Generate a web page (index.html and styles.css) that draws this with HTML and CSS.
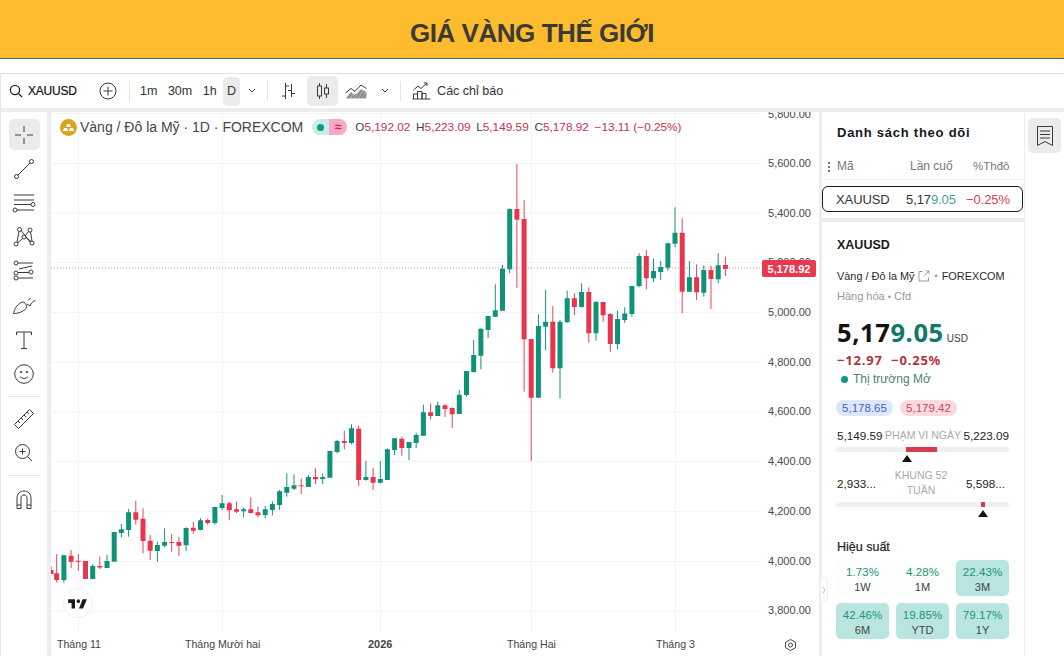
FILE: index.html
```html
<!DOCTYPE html>
<html lang="vi">
<head>
<meta charset="utf-8">
<title>Giá vàng thế giới</title>
<link rel="stylesheet" href="styles.css">
</head>
<body>
<header class="banner"><h1>GIÁ VÀNG THẾ GIỚI</h1></header>
<div class="app">
  <div class="toolbar">
    <div class="sym">
      <svg class="ic" width="14" height="14" viewBox="0 0 14 14"><circle cx="6" cy="6" r="4.6"/><path d="M9.4 9.4L13 13"/></svg>
      <span>XAUUSD</span>
    </div>
    <svg class="ic" width="18" height="18" viewBox="0 0 18 18"><circle cx="9" cy="9" r="8"/><path d="M9 4.5v9M4.5 9h9"/></svg>
    <i class="sep first"></i>
    <div class="tfs">
      <span>1m</span><span>30m</span><span>1h</span><span class="active d">D</span>
    </div>
    <svg class="ic chev" width="10" height="6" viewBox="0 0 10 6"><path d="M2 1l3 3 3-3"/></svg>
    <i class="sep"></i>
    <svg class="ic bars" width="16" height="18" viewBox="0 0 16 18"><path d="M5.500 1V17M5.500 4H9M2 14H5.500M11.500 2V15M8 8.500H11.500M11.500 11.500H15"/></svg>
    <span class="active candle">
      <svg class="ic" width="14" height="18" viewBox="0 0 14 18"><path d="M3.500 1V4M3.500 14V17M10.500 2V6M10.500 12V16"/><rect x="1.500" y="4" width="4" height="10"/><rect x="8.500" y="6" width="4" height="6"/></svg>
    </span>
    <svg class="ic area" width="22" height="16" viewBox="0 0 22 16"><path d="M0.500 10L6 5.500 10 8.500 16 2 21.500 5.500"/><path class="hatch" d="M0.500 15.500L6 9 10 12 16 6 21.500 9V15.500Z"/><path class="hatchline" d="M3 15L7 10M7 15L11 11M11 15L16 8M15 15L19 9M18 15L21 11"/></svg>
    <svg class="ic chev wide" width="10" height="6" viewBox="0 0 10 6"><path d="M2 1l3 3 3-3"/></svg>
    <i class="sep"></i>
    <svg class="ic ind" width="19" height="18" viewBox="0 0 19 18"><path d="M1.500 8L6 4 9 6.500 15 1M12 1H15V4"/><path d="M1.500 17V12H5.500V17M5.500 17V9.500H10V17M10 17V11.500H14V17M0.500 17H18.500"/></svg>
    <span class="ind-label">Các chỉ báo</span>
  </div>

  <div class="main">
    <aside class="tools">
      <span class="tool active"><svg class="ic" width="20" height="20" viewBox="0 0 20 20"><path d="M10 1V7M10 13V19M1 10H7M13 10H19"/></svg></span>
      <span class="tool"><svg class="ic" width="22" height="22" viewBox="0 0 22 22"><circle cx="3.500" cy="18.500" r="2"/><circle cx="18.500" cy="3.500" r="2"/><path d="M5 17L17 5"/></svg></span>
      <span class="tool"><svg class="ic" width="24" height="22" viewBox="0 0 24 22"><path d="M2 3H22M2 8H22M2 12.500H19M5 18H22"/><circle cx="21" cy="12.500" r="2"/><circle cx="3" cy="18" r="2"/></svg></span>
      <span class="tool"><svg class="ic" width="22" height="22" viewBox="0 0 22 22"><circle cx="6.500" cy="3.500" r="2"/><circle cx="17" cy="4" r="2"/><circle cx="3" cy="18" r="2"/><circle cx="19" cy="17" r="2"/><circle cx="11" cy="11" r="2"/><path d="M6 5.500L4 16M8 4.500L17 16M15.500 5.500L12.500 9.500M9.500 12.500L4.500 17M13 11.500L18 15.500M17.500 6L19 15"/></svg></span>
      <span class="tool"><svg class="ic" width="22" height="22" viewBox="0 0 22 22"><circle cx="3" cy="3" r="2"/><circle cx="3" cy="13" r="2"/><circle cx="18" cy="12" r="2"/><circle cx="3" cy="18" r="2"/><path d="M5 3H20M5 12.500H16M5 18H20M6 9L19 6" /></svg></span>
      <span class="tool"><svg class="ic" width="24" height="20" viewBox="0 0 24 20"><path d="M1.500 18.500C3 11 8 7 12 7C14 9 15 11 14.500 13C11 17 6 18.500 1.500 18.500ZM15 9L18 11C19 8 21 6 23.500 5.500M16 5.500L18.500 3"/></svg></span>
      <span class="tool"><svg class="ic" width="18" height="20" viewBox="0 0 18 20"><path d="M1.500 5V2H16.500V5M9 2V18.500M6 18.500H12"/></svg></span>
      <span class="tool"><svg class="ic" width="20" height="20" viewBox="0 0 20 20"><circle cx="10" cy="10" r="9.300"/><circle cx="7" cy="8" r=".8"/><circle cx="13" cy="8" r=".8"/><path d="M6 12.500C8 15 12 15 14 12.500"/></svg></span>
      <i class="tool-sep"></i>
      <span class="tool"><svg class="ic" width="22" height="22" viewBox="0 0 22 22"><path d="M1.500 16.500L16.500 1.500 20.500 5.500 5.500 20.500ZM5 13L7 15M8 10L10 12M11 7L13 9M14 4L16 6"/></svg></span>
      <span class="tool"><svg class="ic" width="20" height="20" viewBox="0 0 20 20"><circle cx="8.500" cy="8.500" r="7"/><path d="M13.500 13.500L18 18M8.500 5.500V11.500M5.500 8.500H11.500"/></svg></span>
      <i class="tool-sep"></i>
      <span class="tool magnet"><svg class="ic" width="16" height="20" viewBox="0 0 16 20"><path d="M1 18.500V8C1 4 4 1 8 1S15 4 15 8V18.500H11V8C11 6 10 5 8 5S5 6 5 8V18.500ZM1 15H5M11 15H15"/></svg></span>
    </aside>

    <section class="chart">
      <svg class="plot" width="768" height="544" viewBox="51 112 768 544">
        <path class="grid" d="M51 113.500H760M51 163.500H760M51 213H760M51 262.500H760M51 312.500H760M51 362H760M51 412H760M51 461.500H760M51 511.500H760M51 561.500H760M51 611H760M78.500 112V632M222.500 112V632M380.500 112V632M531.500 112V632M675.500 112V632"/>
        <path class="wick up" d="M63.900 555V582.700M92.700 564V579M107 554.700V568M121.400 524V537.300M128.600 509V536.700M157.400 541.700V561.700M164.600 528.300V547.300M186.100 527.300V551M200.500 518.300V530.300M214.900 506.700V524.700M222.100 495V510M243.600 507.700V517.300M265.200 506V518.300M272.400 501.300V515.300M279.600 490V510M286.800 473.300V496.700M294 474.300V490M308.400 474.700V487M322.700 473.300V484M337.100 440V453.300M351.500 424.300V444.300M365.900 461V480.700M380.300 461V483.300M387.400 448.300V480M394.600 438V455M409 442V460M416.200 432.700V448M423.400 404.700V435.700M437.800 401.700V416M459.300 390V414M466.500 371V396.700M473.700 340V372.700M480.900 328.300V369.300M488.100 316V338M495.300 284.300V316.700M502.500 265V310.700M509.700 208.300V273.300M538.400 314.300V398M545.600 290V350M560 320V398.300M567.200 290.700V322.700M581.600 283.300V307.700M596 301.700V340.700M617.500 310.700V349M624.700 307.300V322.700M631.900 285.700V316.700M639.100 253.300V287.300M653.500 258.700V281.700M660.700 261V280M667.900 242.700V270.700M675 207.300V247.300M689.400 261V291.700M703.800 265.300V296.700M718.200 253.300V283.300"/>
        <path class="body up" d="M63.900 555.300V580M92.700 566V579M107 561V568M114.200 532V561.700M121.400 529.300V533M128.600 512.300V530M157.400 545V551M164.600 542V545.700M186.100 528V545.300M200.500 520.300V530M214.900 507V523M222.100 503.300V508M243.600 509.300V511.300M265.200 509.300V515M272.400 504V510M279.600 491.300V505M286.800 487V492.700M294 485.300V488.700M308.400 477V487M322.700 477V479M329.900 451V477.700M337.100 441V452M351.500 428.300V443M365.900 477V480M380.300 479V482.700M387.400 449.300V480M394.600 438.300V450M409 442V448M416.200 435V443M423.400 412.300V435.700M437.800 405.300V416M459.300 394.700V414M466.500 371V395M473.700 355V372M480.900 328.700V355.700M488.100 316V330M495.300 310.300V316.700M502.500 268.700V310.700M509.700 209V269.300M538.400 326V397.700M545.600 321.700V326.700M560 321.700V368.300M567.200 298.300V322.300M581.600 292V307M596 301.700V333.300M617.500 319V344M624.700 313.500V320M631.900 286V314M639.100 256V286M653.500 271V278.300M660.700 267V272M667.900 243.300V267.700M675 232.700V243.700M689.400 277.300V291.700M703.800 270V292.700M718.200 265.300V279.300"/>
        <path class="wick down" d="M51 566V574M56.700 554.300V582.300M71.100 550V568M78.300 554V570.700M85.500 561V579M99.800 556.700V569M135.800 500.700V524.700M143 508.300V553.300M150.200 535V560M171.700 534V551.700M178.900 536.700V555.700M193.300 521.700V533.700M207.700 518.700V524.700M229.300 502V520.300M236.500 501.700V513M250.800 497.300V513.300M258 506.700V517.300M301.200 478.300V494M315.500 468.300V484M344.300 430.700V449.300M358.700 425.700V486M373.100 468V490M401.800 436.700V455.700M430.600 403.300V419.300M445 404.300V417M452.200 407.300V428M516.900 164V287.700M524.100 200V391.700M531.200 339V461M552.800 306V372.700M574.400 293.300V315M588.800 287.300V342.700M603.100 301.700V321.700M610.300 313.300V351.700M646.300 250V289.300M682.200 218.300V313.300M696.600 264.300V300M711 265.700V309M725.400 256.700V276"/>
        <path class="body down" d="M51 570V574M56.700 573.300V580M71.100 555.700V561.700M78.300 560.700V561.700M85.500 561V579M99.800 566V567.500M135.800 512.300V519.700M143 518.700V541M150.200 540.700V550.700M171.700 542V543M178.900 542V545.700M193.300 527.700V530.700M207.700 520V523M229.300 503.300V510.300M236.500 509.300V511.700M250.800 509.300V513M258 512.300V515.300M301.200 485.300V486.300M315.500 477V479.300M344.300 441V443M358.700 428.700V480M373.100 477V482.700M401.800 438.700V448M430.600 412.300V416M445 405.300V409M452.200 408V414.300M516.900 209V219.700M524.100 219V339.300M531.200 339V397.700M552.800 321.700V368.300M574.400 298.300V307M588.800 292V333.300M603.100 302V315.300M610.300 314V344M646.300 256V278.300M682.200 232.700V291.700M696.600 277.300V292.300M711 270V279M725.400 265V269"/>
        <path class="last" d="M51 268H760"/>
        <text class="py" x="811" y="117.500">5,800.00</text>
        <text class="py" x="811" y="167">5,600.00</text>
        <text class="py" x="811" y="216.500">5,400.00</text>
        <text class="py" x="811" y="266">5,200.00</text>
        <text class="py" x="811" y="316">5,000.00</text>
        <text class="py" x="811" y="365.500">4,800.00</text>
        <text class="py" x="811" y="415">4,600.00</text>
        <text class="py" x="811" y="464.500">4,400.00</text>
        <text class="py" x="811" y="514.500">4,200.00</text>
        <text class="py" x="811" y="564.500">4,000.00</text>
        <text class="py" x="811" y="614">3,800.00</text>
        <rect class="tag" x="762" y="260" width="54" height="17" rx="2"/>
        <text class="tagtxt" x="789" y="272.500">5,178.92</text>
        <text class="tx" x="57" y="648">Tháng 11</text>
        <text class="tx" x="185" y="648">Tháng Mười hai</text>
        <text class="tx bold" x="368" y="648">2026</text>
        <text class="tx" x="507" y="648">Tháng Hai</text>
        <text class="tx" x="656" y="648">Tháng 3</text>
        <g class="gear"><path d="M790.500 639.500L795.500 642.300V647.700L790.500 650.500 785.500 647.700V642.300Z"/><circle cx="790.500" cy="645" r="2"/></g>
        <circle class="logo-bg" cx="77.700" cy="603.300" r="14.500"/>
        <g class="logo-mark" transform="translate(67 595.600) scale(.57 .62)"><path d="M14 6H2V12H8V21H14ZM28 21H21L27.500 6H35Z"/><circle cx="20" cy="9" r="3"/></g>
      </svg>
      <div class="legend">
        <svg class="coin" width="17" height="17" viewBox="0 0 17 17"><circle cx="8.500" cy="8.500" r="8.500"/><path d="M5.800 8L7.200 5H9.800L11.200 8ZM2.800 12L4.200 9H7L8.200 12ZM8.800 12L10 9H12.800L14.200 12Z"/></svg>
        <span class="title">Vàng / Đô la Mỹ · 1D · FOREXCOM</span>
        <span class="status"><span class="st-open"><i></i></span><span class="st-ext">≈</span></span>
        <span class="ohlc"><b>O</b>5,192.02</span>
        <span class="ohlc"><b>H</b>5,223.09</span>
        <span class="ohlc"><b>L</b>5,149.59</span>
        <span class="ohlc"><b>C</b>5,178.92</span>
        <span class="ohlc">−13.11 (−0.25%)</span>
      </div>
    </section>

    <aside class="side">
      <section class="watch">
        <h2>Danh sách theo dõi</h2>
        <div class="wl-head"><i class="dots"></i><span class="c1">Mã</span><span class="c2">Lần cuố</span><span class="c3">%Thđô</span></div>
        <div class="wl-row"><span class="c1">XAUUSD</span><span class="c2">5,17<em class="t1">9.05</em></span><span class="c3 neg">−0.25%</span></div>
      </section>
      <section class="detail">
        <div class="d-sym">XAUUSD</div>
        <div class="d-name">Vàng / Đô la Mỹ
          <svg class="link" width="12" height="12" viewBox="0 0 12 12"><path d="M4.500 1.500H1V11H10.500V7.500M6.500 5.500L11 1M8 1H11V4"/></svg>
          <span class="dot">•</span> FOREXCOM</div>
        <div class="d-type">Hàng hóa <span class="dot">•</span> Cfd</div>
        <div class="d-price"><span class="big">5,17<em>9.05</em></span><span class="cur">USD</span></div>
        <div class="d-chg">−12.97&nbsp; −0.25%</div>
        <div class="d-mkt"><i></i>Thị trường Mở</div>
        <div class="pills"><span class="bid">5,178.65</span><span class="ask">5,179.42</span></div>
        <div class="range-row day"><span>5,149.59</span><small>PHẠM VI NGÀY</small><span>5,223.09</span></div>
        <div class="bar day-bar"><i class="fill-day"></i></div>
        <div class="tri tri-day"></div>
        <div class="range-row year"><span>2,933...</span><small>KHUNG 52 TUẦN</small><span>5,598...</span></div>
        <div class="bar year-bar"><i class="fill-year"></i></div>
        <div class="tri tri-year"></div>
        <h3>Hiệu suất</h3>
        <div class="perf">
          <div class="cell soft"><b>1.73%</b><span>1W</span></div>
          <div class="cell soft"><b>4.28%</b><span>1M</span></div>
          <div class="cell"><b>22.43%</b><span>3M</span></div>
          <div class="cell"><b>42.46%</b><span>6M</span></div>
          <div class="cell"><b>19.85%</b><span>YTD</span></div>
          <div class="cell"><b>79.17%</b><span>1Y</span></div>
        </div>
      </section>
      <span class="handle"><svg width="4" height="8" viewBox="0 0 4 8"><path d="M1 1l2 3-2 3"/></svg></span>
    </aside>

    <aside class="strip">
      <span class="strip-btn"><svg class="ic" width="18" height="22" viewBox="0 0 18 22"><path d="M1.500 1.500H16.500V20.500L9 16.500 1.500 20.500ZM4 6H14M4 9.500H14M4 13H14"/></svg></span>
    </aside>
  </div>
</div>
</body>
</html>
```
FILE: styles.css
```css
* { box-sizing: border-box; }
html, body { margin: 0; height: 656px; overflow: hidden; background: #fff; }
body { font-family: "Liberation Sans", Arial, sans-serif; color: #222; }
em { font-style: normal; }
i { font-style: normal; display: block; }

.banner { height: 59px; background: #fdbb2e; border-bottom: 1px solid #4c6467; display: flex; align-items: center; justify-content: center; }
.banner h1 { margin: 9px 0 0; font-size: 26px; font-weight: 700; color: #3b3a36; letter-spacing: -.45px; }

.app { margin-top: 14px; height: 583px; border-top: 1px solid #e1e1e1; border-left: 1px solid #e6e6e6; display: flex; flex-direction: column; }

.ic { fill: none; stroke: #3a3a3a; stroke-width: 1; flex: none; display: block; }

.toolbar { height: 34px; flex: none; display: flex; align-items: center; padding-left: 8px; font-size: 12.500px; color: #333; background: #fff; }
.sym { width: 90px; display: flex; align-items: center; gap: 5px; font-weight: 500; color: #111; }
.sym .ic { stroke-width: 1.300; stroke: #222; }
.sym span { font-size: 12px; letter-spacing: -.2px; -webkit-text-stroke: .2px #111; }
.sep { width: 1px; height: 20px; background: #e3e3e3; margin-left: 10px; flex: none; }
.sep.first { margin-left: 12px; }
.tfs { display: flex; align-items: center; gap: 10.500px; margin-left: 10px; }
.active { background: #ebebeb; border-radius: 5px; }
.d { width: 17px; height: 29px; margin-left: -4px; display: flex; align-items: center; justify-content: center; }
.chev { margin-left: 7px; }
.chev.wide { margin-left: 13px; }
.bars { margin-left: 12px; }
.candle { width: 31px; height: 30px; margin-left: 11px; display: flex; align-items: center; justify-content: center; }
.area { margin-left: 7px; }
.hatch { fill: #a5a5a5; stroke: none; }
.hatchline { stroke: #666; stroke-width: .8; }
.ind { margin-left: 11px; }
.ind-label { margin-left: 6px; font-size: 12.500px; }

.main { flex: 1; min-height: 0; display: flex; background: #ededed; padding-top: 4px; }

.tools { width: 46px; flex: none; background: #fff; display: flex; flex-direction: column; align-items: center; padding-top: 7px; }
.tool { width: 31px; height: 31px; flex: none; margin-bottom: 3.200px; display: flex; align-items: center; justify-content: center; }
.tool-sep { width: 32px; height: 1px; background: #e6e6e6; margin-top: 3.500px; flex: none; }
.tool-sep + .tool { margin-top: 6.500px; }
.tool-sep + .magnet { margin-top: 8.500px; }

.chart { width: 768px; margin-left: 4px; flex: none; position: relative; background: #fff; overflow: hidden; }
.plot { display: block; }
.grid { stroke: #f3f4f7; stroke-width: 1; fill: none; }
.wick { fill: none; stroke-width: 1; }
.wick.up { stroke: #0f957d; }
.wick.down { stroke: #e8425a; }
.body { fill: none; stroke-width: 5; }
.body.up { stroke: #0e9379; }
.body.down { stroke: #e8354c; }
.last { stroke: #e8556a; stroke-width: 1; stroke-dasharray: 1 2; opacity: .65; fill: none; }
.py { font-size: 11px; fill: #4a4a4a; text-anchor: end; letter-spacing: .02px; font-family: "Liberation Sans", sans-serif; }
.tag { fill: #e9384f; }
.tagtxt { font-size: 11px; font-weight: 700; fill: #fff; text-anchor: middle; font-family: "Liberation Sans", sans-serif; }
.tx { font-size: 10.600px; fill: #444; font-family: "Liberation Sans", sans-serif; }
.tx.bold { font-weight: 700; font-size: 11px; }
.gear { fill: none; stroke: #444; stroke-width: 1; }
.logo-bg { fill: #fff; stroke: #f0f0f0; stroke-width: 1; }
.logo-mark { fill: #1a1a1a; }

.legend { position: absolute; left: 9px; top: 7px; display: flex; align-items: center; height: 16px; font-size: 11.800px; color: #c4344d; white-space: nowrap; }
.coin { fill: #d9a51f; flex: none; }
.coin path { fill: #fff; }
.title { margin-left: 3px; font-size: 14px; color: #454545; }
.status { display: flex; height: 16px; margin: 0 8px 0 9px; }
.status span { display: flex; align-items: center; justify-content: center; width: 17px; }
.st-open { background: #c9ece6; border-radius: 8px 0 0 8px; }
.st-open i { width: 7px; height: 7px; border-radius: 50%; background: #0b9a80; }
.st-ext { background: #f8a9c6; border-radius: 0 8px 8px 0; color: #d2224b; font-size: 12px; font-weight: 700; width: 18px !important; }
.ohlc { margin-right: 5.700px; }
.ohlc b { font-weight: 400; color: #444; }

.side { width: 203px; margin-left: 3px; flex: none; display: flex; flex-direction: column; gap: 4px; position: relative; }
.watch { height: 106px; background: #fff; padding-top: 13px; border-right: 1px solid #ececec; }
.watch h2 { margin: 0 0 0 15px; font-size: 13px; line-height: 16px; letter-spacing: .75px; font-weight: 700; color: #131722; }
.wl-head { display: flex; align-items: center; height: 26px; margin-top: 13px; padding-bottom: 1px; border-bottom: 1px solid #efefef; font-size: 12px; color: #777; position: relative; }
.dots { position: absolute; left: 6px; top: 8px; width: 2px; height: 2px; border-radius: 50%; background: #444; box-shadow: 0 4px 0 #444, 0 8px 0 #444; }
.wl-head .c1 { margin-left: 15px; width: 73px; }
.wl-head .c2 { width: 45px; text-align: left; }
.wl-head .c3 { margin-left: 18px; font-size: 11.500px; }
.wl-row { height: 26px; margin: 6px 1px 0 0; border: 1px solid #1b1b1b; border-radius: 6px; display: flex; align-items: center; font-size: 13px; color: #333; letter-spacing: -.1px; }
.wl-row .c1 { margin-left: 13px; width: 70px; }
.wl-row .c2 { width: 60px; }
.t1 { color: #4aa596; }
.neg { color: #d8405a; }

.detail { flex: 1; background: #fff; padding: 15px 15px 0 14px; border-right: 1px solid #ececec; }
.d-sym { font-size: 12.500px; line-height: 16px; font-weight: 700; color: #1a1a1a; margin-left: 1px; }
.d-name { margin: 15px 0 0 1px; font-size: 10.900px; line-height: 16px; color: #2a2a2a; display: flex; align-items: center; gap: 4px; white-space: nowrap; }
.link { fill: none; stroke: #999; stroke-width: 1; flex: none; }
.dot { color: #999; font-size: 9px; }
.d-type { margin: 4px 0 0 1px; font-size: 11px; line-height: 16px; color: #999; }
.d-price { margin: 12px 0 0 1px; display: flex; align-items: baseline; line-height: 30px; height: 30px; }
.big { font-family: "Noto Sans", sans-serif; font-size: 25.500px; font-weight: 700; color: #111; letter-spacing: .6px; }
.big em { color: #107a68; }
.cur { margin-left: 3px; font-size: 10px; color: #444; }
.d-chg { margin: 5px 0 0 1px; font-family: "Noto Sans", sans-serif; font-size: 13px; line-height: 16px; font-weight: 700; color: #b03342; letter-spacing: .8px; }
.d-mkt { margin: 3px 0 0 4px; font-size: 12px; line-height: 16px; color: #4f8073; display: flex; align-items: center; gap: 5px; }
.d-mkt i { width: 7px; height: 7px; border-radius: 50%; background: #0b9a80; margin-left: 1px; }
.pills { margin-top: 13px; display: flex; gap: 7px; font-size: 11.500px; }
.pills span { height: 16px; line-height: 16px; width: 57px; text-align: center; border-radius: 8px; }
.bid { background: #dce7fb; color: #3f63c7; }
.ask { background: #f9dadd; color: #c7485a; }
.range-row { display: flex; justify-content: space-between; align-items: center; font-size: 11.700px; color: #222; }
.range-row small { font-size: 10.500px; color: #a9a9a9; text-align: center; }
.range-row.day { margin-top: 11px; height: 16px; padding-left: 1px; white-space: nowrap; }
.range-row.year { margin-top: 6px; height: 30px; padding: 0 4px 0 1px; }
.range-row.year small { width: 56px; line-height: 15px; margin-top: -1px; }
.bar { height: 5px; background: #f0f0f0; border-radius: 2px; position: relative; width: 173px; }
.day-bar { margin-top: 4px; }
.year-bar { margin-top: 4px; }
.bar i { position: absolute; top: 0; height: 100%; background: #d93a50; }
.fill-day { left: 70px; width: 31px; }
.fill-year { left: 145px; width: 4px; }
.tri { width: 0; height: 0; border-left: 5px solid transparent; border-right: 5px solid transparent; border-bottom: 7px solid #111; margin-top: 3px; }
.tri-day { margin-left: 66px; }
.tri-year { margin-left: 142px; }
.detail h3 { margin: 22px 0 0 1px; font-size: 12.500px; line-height: 16px; font-weight: 500; color: #222; -webkit-text-stroke: .2px #222; }
.perf { margin-top: 5px; display: grid; grid-template-columns: repeat(3, 53px); grid-auto-rows: 36px; gap: 7px; }
.cell { background: #b9e5df; border-radius: 5px; display: flex; flex-direction: column; align-items: center; justify-content: center; padding-top: 3px; font-size: 11px; line-height: 15px; color: #444; }
.cell.soft { background: #fbfefd; }
.cell b { font-weight: 400; font-size: 11.500px; color: #1b9379; letter-spacing: .1px; }

.handle { position: absolute; left: -2px; top: 466px; width: 8px; height: 24px; background: #fff; border: 1px solid #eee; border-radius: 0 4px 4px 0; display: flex; align-items: center; justify-content: center; }
.handle svg { fill: none; stroke: #bbb; display: block; }

.strip { flex: 1; background: #fff; padding: 6px 0 0 3px; }
.strip-btn { width: 33px; height: 35px; background: #ebebeb; border-radius: 5px; display: flex; align-items: center; justify-content: center; }
```
